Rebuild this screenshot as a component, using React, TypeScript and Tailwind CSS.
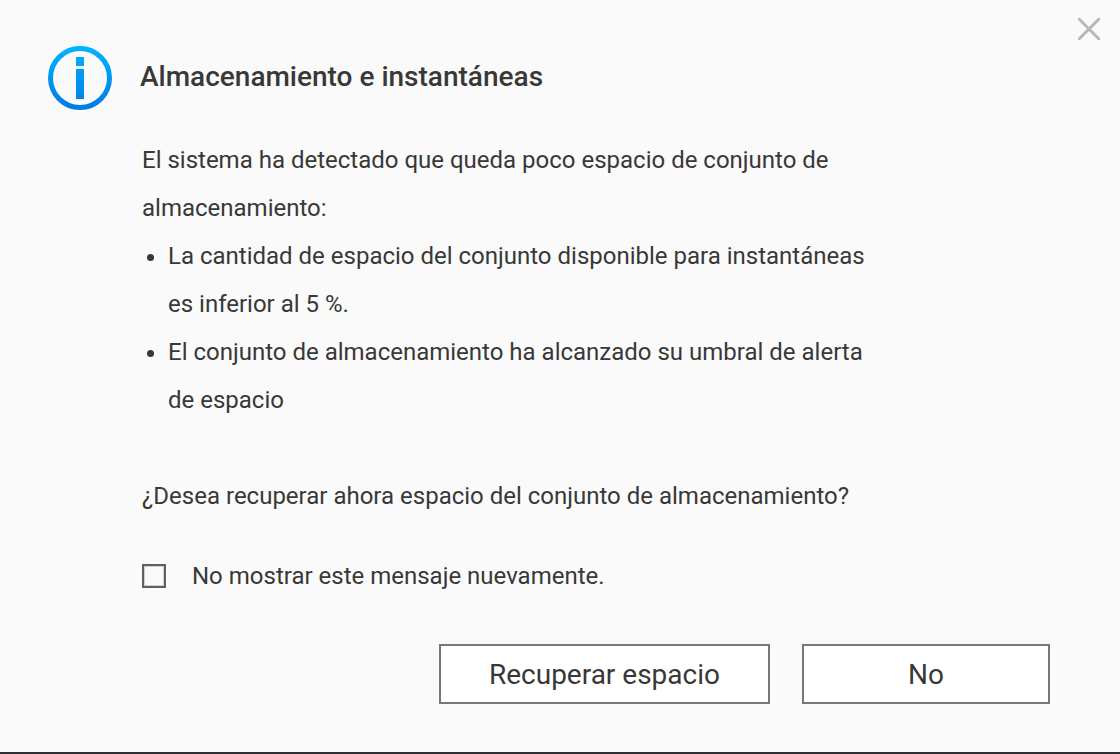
import { useState } from 'react';

const reasons = [
  'La cantidad de espacio del conjunto disponible para instantáneas es inferior al 5 %.',
  'El conjunto de almacenamiento ha alcanzado su umbral de alerta de espacio'
];

const InfoIcon = () => (
  <svg className="h-16 w-16 shrink-0" viewBox="0 0 64 64" fill="none" aria-hidden="true">
    <defs>
      <linearGradient id="info-gradient" x1="0" y1="0" x2="0" y2="64" gradientUnits="userSpaceOnUse">
        <stop offset="0" stopColor="#00b4ff" />
        <stop offset="1" stopColor="#007ae6" />
      </linearGradient>
    </defs>
    <circle cx="32" cy="32" r="29.5" stroke="url(#info-gradient)" strokeWidth="5" />
    <path d="M28 11h8v9h-8zM28 23h8v30h-8z" fill="url(#info-gradient)" />
  </svg>
);

const CloseIcon = () => (
  <svg className="h-[22px] w-[22px]" viewBox="0 0 22 22" fill="none" aria-hidden="true">
    <path d="M0 0l22 22M22 0L0 22" stroke="#b8b8b8" strokeWidth="3" />
  </svg>
);

export default function App() {
  const [hidden, setHidden] = useState(false);

  return (
    <div
      role="dialog"
      aria-labelledby="dialog-title"
      className="relative flex min-h-screen flex-col border-b-2 border-[#302f31] bg-[#fafafa] pt-[46px] pr-[70px] pb-12 pl-12 font-['Roboto',sans-serif] text-2xl text-[#383838]"
    >
      <button type="button" aria-label="Cerrar" className="absolute top-[18px] right-5">
        <CloseIcon />
      </button>

      <header className="flex items-center gap-7">
        <InfoIcon />
        <h1 id="dialog-title" className="pb-0.5 text-[28px] font-medium">
          Almacenamiento e instantáneas
        </h1>
      </header>

      <div className="mt-[26px] ml-[94px] max-w-[740px] leading-[48px]">
        <p>El sistema ha detectado que queda poco espacio de conjunto de almacenamiento:</p>
        <ul className="list-disc pl-[26px]">
          {reasons.map((reason) => (
            <li key={reason}>{reason}</li>
          ))}
        </ul>
        <p className="mt-12">¿Desea recuperar ahora espacio del conjunto de almacenamiento?</p>
      </div>

      <label className="mt-8 ml-[94px] flex items-center gap-[26px] leading-[48px]">
        <input
          type="checkbox"
          checked={hidden}
          onChange={(e) => setHidden(e.target.checked)}
          className="h-6 w-6 appearance-none border-2 border-[#606060] bg-[#fafafa] shadow-[inset_0_0_0_1px_#d0d0d0] checked:bg-[#007ae6]"
        />
        No mostrar este mensaje nuevamente.
      </label>

      <footer className="mt-auto flex justify-end gap-8 text-[28px]">
        <button type="button" className="h-15 border-2 border-[#777777] bg-white px-12 pt-0.5">
          Recuperar espacio
        </button>
        <button type="button" className="h-15 w-62 border-2 border-[#777777] bg-white pt-0.5">
          No
        </button>
      </footer>
    </div>
  );
}
